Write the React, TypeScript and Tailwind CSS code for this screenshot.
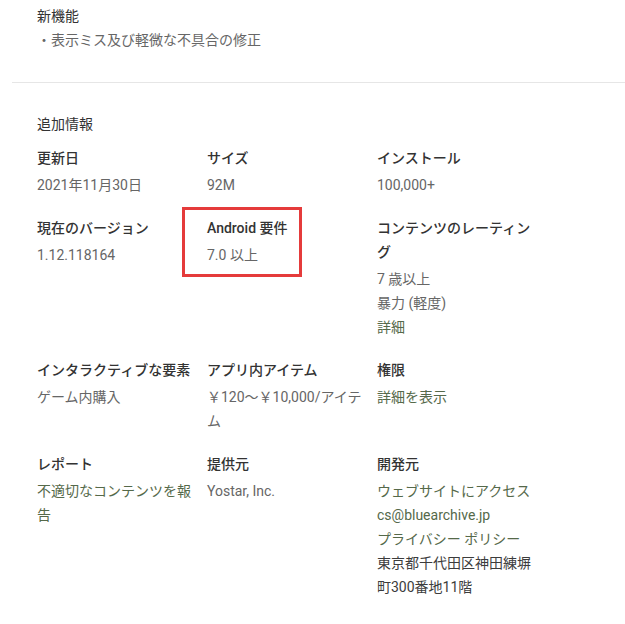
import React from 'react';

type Line = { text: string; kind?: 'plain' | 'link' | 'dark' };

interface InfoItem {
  label: string;
  lines: Line[];
  highlight?: boolean;
}

const rows: InfoItem[][] = [
  [
    { label: '更新日', lines: [{ text: '2021年11月30日' }] },
    { label: 'サイズ', lines: [{ text: '92M' }] },
    { label: 'インストール', lines: [{ text: '100,000+' }] },
  ],
  [
    { label: '現在のバージョン', lines: [{ text: '1.12.118164' }] },
    { label: 'Android 要件', lines: [{ text: '7.0 以上' }], highlight: true },
    {
      label: 'コンテンツのレーティング',
      lines: [{ text: '7 歳以上' }, { text: '暴力 (軽度)' }, { text: '詳細', kind: 'link' }],
    },
  ],
  [
    { label: 'インタラクティブな要素', lines: [{ text: 'ゲーム内購入' }] },
    { label: 'アプリ内アイテム', lines: [{ text: '￥120～￥10,000/アイテム' }] },
    { label: '権限', lines: [{ text: '詳細を表示', kind: 'link' }] },
  ],
  [
    { label: 'レポート', lines: [{ text: '不適切なコンテンツを報告', kind: 'link' }] },
    { label: '提供元', lines: [{ text: 'Yostar, Inc.' }] },
    {
      label: '開発元',
      lines: [
        { text: 'ウェブサイトにアクセス', kind: 'link' },
        { text: 'cs@bluearchive.jp', kind: 'link' },
        { text: 'プライバシー ポリシー', kind: 'link' },
        { text: '東京都千代田区神田練塀町300番地11階', kind: 'dark' },
      ],
    },
  ],
];

const lineColor = (kind?: Line['kind']) => {
  switch (kind) {
    case 'link':
      return 'text-[#55694a]';
    case 'dark':
      return 'text-[#3c3c3c]';
    default:
      return 'text-[#666666]';
  }
};

const InfoCell: React.FC<{ item: InfoItem }> = ({ item }) => (
  <div className="relative w-[170px] pr-[10px]">
    {item.highlight && (
      <div className="absolute left-[-25px] top-[-9px] w-[120px] h-[70px] border-[3px] border-[#e53b3b]" />
    )}
    <div className="font-medium text-[#333333] leading-6 mb-[3px]">{item.label}</div>
    {item.lines.map((l) => (
      <div key={l.text} className={`leading-6 ${lineColor(l.kind)}`}>
        {l.text}
      </div>
    ))}
  </div>
);

const App: React.FC = () => {
  return (
    <div
      className="w-[625px] h-[624px] bg-white text-[14px] overflow-hidden"
      style={{ fontFamily: 'Roboto, "Noto Sans CJK JP", sans-serif' }}
    >
      <div className="pl-[37px] pt-[4px]">
        <div className="leading-6 text-[#333333]">新機能</div>
        <div className="leading-6 text-[#666666]">・表示ミス及び軽微な不具合の修正</div>
      </div>
      <div className="ml-[12px] mt-[30px] border-t border-[#e6e6e6]" />
      <div className="pl-[37px] pt-[29px]">
        <div className="leading-6 text-[#333333] mb-[10px]">追加情報</div>
        <div className="flex flex-col gap-[19px]">
          {rows.map((row, i) => (
            <div key={i} className="flex">
              {row.map((item) => (
                <InfoCell key={item.label} item={item} />
              ))}
            </div>
          ))}
        </div>
      </div>
    </div>
  );
};

export default App;
